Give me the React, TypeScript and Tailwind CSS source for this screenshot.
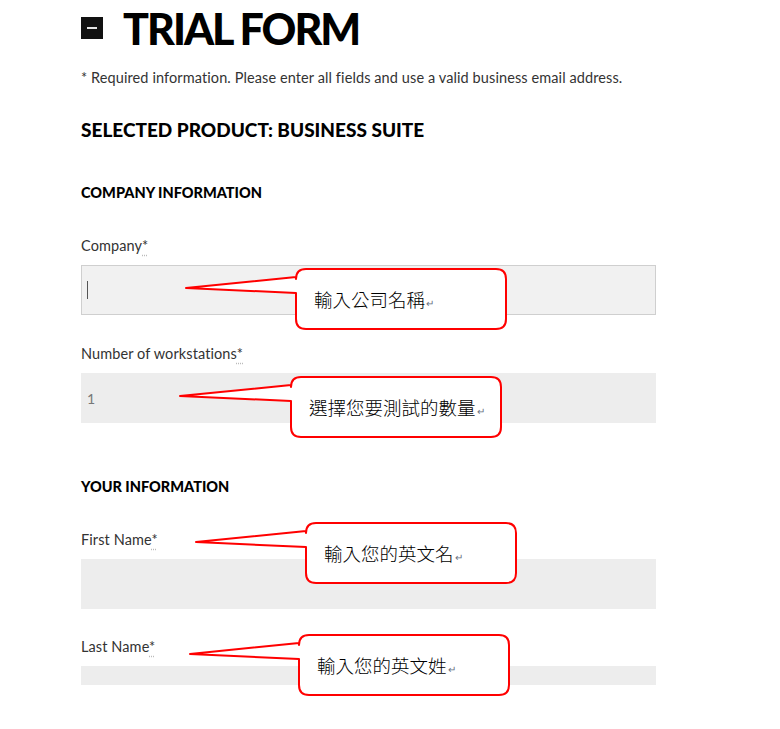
import React from 'react';

type CalloutProps = {
  x: number;
  y: number;
  tip: number;
  text: string;
};

const Callout: React.FC<CalloutProps> = ({ x, y, tip, text }) => {
  const w = 210;
  const h = 60;
  const r = 10;
  const L = tip + 2;
  const T = 2;
  const R = L + w;
  const B = T + h;
  const d = `M 2 ${T + 19} L ${L} ${T + 8} V ${T + r} Q ${L} ${T} ${L + r} ${T} H ${R - r} Q ${R} ${T} ${R} ${T + r} V ${B - r} Q ${R} ${B} ${R - r} ${B} H ${L + r} Q ${L} ${B} ${L} ${B - r} V ${T + 24} Z`;
  return (
    <>
      <svg
        className="absolute"
        style={{ left: x - tip - 2, top: y - 2 }}
        width={tip + w + 4}
        height={h + 4}
      >
        <path d={d} fill="#ffffff" stroke="#ff0000" strokeWidth={2} strokeLinejoin="round" />
      </svg>
      <div
        className="absolute flex items-center font-['Noto_Sans_CJK_TC',sans-serif] text-[18.5px] font-light leading-none text-black"
        style={{ left: x + 18, top: y, height: h }}
      >
        <span>{text}</span>
        <span className="ml-[1px] mt-[8px] text-[10px] text-gray-500">↵</span>
      </div>
    </>
  );
};

const Label: React.FC<{ text: string; className?: string }> = ({ text, className }) => (
  <div className={`h-5 text-[14.5px] leading-5 tracking-[0.1px] text-[#333] ${className ?? ''}`}>
    {text}
    <span className="underline decoration-dotted decoration-[#bbb] underline-offset-4">*</span>
  </div>
);

const SectionTitle: React.FC<{ text: string; className?: string }> = ({ text, className }) => (
  <div className={`h-5 text-[14.5px] font-black leading-5 text-black ${className ?? ''}`}>
    {text}
  </div>
);

const callouts: CalloutProps[] = [
  { x: 296, y: 269, tip: 110, text: '輸入公司名稱' },
  { x: 291, y: 377, tip: 111, text: '選擇您要測試的數量' },
  { x: 306, y: 523, tip: 110, text: '輸入您的英文名' },
  { x: 299, y: 635, tip: 109, text: '輸入您的英文姓' },
];

export default function App() {
  return (
    <div className="relative h-[729px] w-[780px] overflow-hidden bg-white font-['Lato',sans-serif]">
      <div className="flex w-[656px] flex-col pl-[81px] pt-[6px]">
        <div className="flex h-[44px] items-center gap-5">
          <div className="flex h-[22px] w-[22px] items-center justify-center bg-[#111]">
            <div className="h-[2px] w-[10px] bg-[#e5e5e5]" />
          </div>
          <h1 className="text-[43px] font-black leading-none tracking-[-2px] text-black">TRIAL FORM</h1>
        </div>

        <p className="mt-[18px] h-5 text-[14.5px] leading-5 tracking-[0.1px] text-[#333]">
          * Required information. Please enter all fields and use a valid business email address.
        </p>

        <h2 className="mt-[30px] h-6 text-[19px] font-black leading-6 text-black">
          SELECTED PRODUCT: BUSINESS SUITE
        </h2>

        <SectionTitle text="COMPANY INFORMATION" className="mt-[41px]" />

        <Label text="Company" className="mt-[33px]" />
        <div className="mt-[9px] flex h-[50px] items-center border border-[#cfcfcf] bg-[#f1f1f1] px-[5px]">
          <div className="h-[18px] w-px bg-[#555]" />
        </div>

        <Label text="Number of workstations" className="mt-[29px]" />
        <div className="mt-[9px] flex h-[50px] items-center bg-[#ededed] px-[6px] text-[14px] text-[#777]">
          1
        </div>

        <SectionTitle text="YOUR INFORMATION" className="mt-[54px]" />

        <Label text="First Name" className="mt-[33px]" />
        <div className="mt-[9px] h-[50px] bg-[#ededed]" />

        <Label text="Last Name" className="mt-[28px]" />
        <div className="mt-[9px] h-[19px] bg-[#ededed]" />
      </div>

      {callouts.map((c) => (
        <Callout key={c.text} {...c} />
      ))}
    </div>
  );
}
